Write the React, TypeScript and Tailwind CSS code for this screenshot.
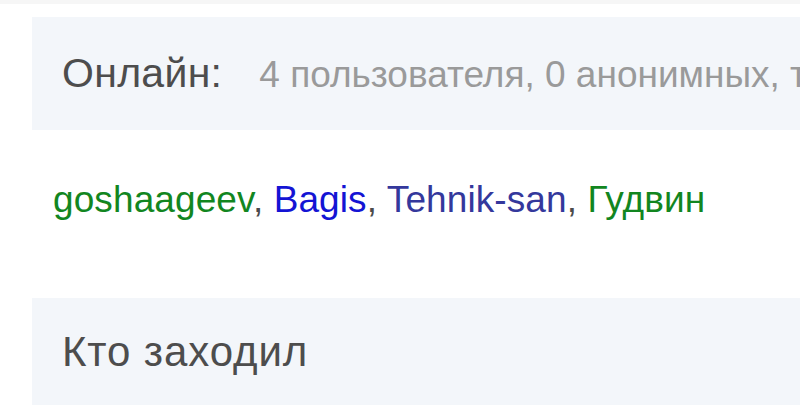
const users = [
  { name: "goshaageev", color: "text-[#12861f]" },
  { name: "Bagis", color: "text-[#1414d4]" },
  { name: "Tehnik-san", color: "text-[#34389c]" },
  { name: "Гудвин", color: "text-[#12861f]" },
];

function SectionHead({ children }: { children: React.ReactNode }) {
  return (
    <div className="pl-8">
      <div className="flex items-center overflow-hidden whitespace-nowrap bg-[#f3f6fa] pl-[30px]">
        {children}
      </div>
    </div>
  );
}

export default function App() {
  return (
    <div className="h-[420px] w-[800px] overflow-hidden bg-white font-['Liberation_Sans',Arial,sans-serif]">
      <div className="h-1 bg-[#f6f6f6]" />

      <div className="pt-[13px]">
        <SectionHead>
          <div className="flex h-[113px] items-center">
            <div className="flex items-baseline">
              <span className="text-[41px] tracking-[0.3px] text-[#4d4d4d]">Онлайн:</span>
              <span className="ml-[37px] text-[37px] text-[#9a9a9a]">
                4 пользователя, 0 анонимных, т
              </span>
            </div>
          </div>
        </SectionHead>
      </div>

      <div className="mt-[50px] pl-[53px] text-[37px] leading-[40px] tracking-[0.1px] whitespace-nowrap text-[#4b4b4b]">
        {users.map((u, i) => (
          <span key={u.name}>
            <span className={u.color}>{u.name}</span>
            {i < users.length - 1 && ", "}
          </span>
        ))}
      </div>

      <div className="mt-[78px]">
        <SectionHead>
          <div className="flex h-[107px] items-center">
            <span className="text-[42px] tracking-[0.9px] text-[#4d4d4d]">Кто заходил</span>
          </div>
        </SectionHead>
      </div>
    </div>
  );
}
